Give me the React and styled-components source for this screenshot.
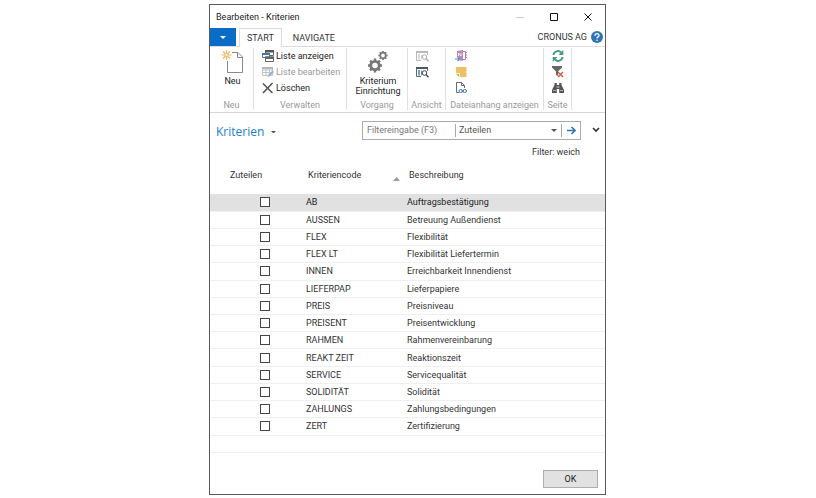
import React, { useState } from "react";
import styled, { createGlobalStyle } from "styled-components";

const GlobalStyle = createGlobalStyle`
  * { box-sizing: border-box; }
  body { margin: 0; background: #fff; }
  body, button, input, select {
    font-family: Roboto, "Open Sans", sans-serif;
    font-size: 9px;
    color: #333;
  }
  button { background: none; border: 0; padding: 0; }
  svg { display: block; flex: none; }
`;

const Desktop = styled.div`
  display: flex;
  justify-content: center;
  min-height: 100vh;
  padding: 4px 1px 3px 0;
`;

const Dialog = styled.section`
  display: flex;
  flex-direction: column;
  width: 100%;
  max-width: 397px;
  background: #fff;
  border: 1px solid #5a5a5a;
`;

const TitleBar = styled.header`
  display: flex;
  align-items: center;
  height: 23px;
  padding: 0 12px 0 6px;
`;

const Title = styled.h1`
  flex: 1;
  margin: 0;
  font-size: 9px;
  font-weight: 400;
  color: #222;
`;

const WindowButtons = styled.div`
  display: flex;
  gap: 24px;
`;

const TabBar = styled.nav`
  display: flex;
  align-items: stretch;
  height: 18px;
`;

const AppMenu = styled.button`
  display: grid;
  place-items: center;
  width: 26px;
  background: #0b6cc7;
`;

const Tab = styled.button`
  position: relative;
  margin-left: 3px;
  padding: 1px 7px 0;
  line-height: 17px;
  color: #333;
  border: 1px solid ${(p) => (p.$active ? "#dcdcdc" : "transparent")};
  border-bottom: 0;
  background: #fff;
  margin-bottom: ${(p) => (p.$active ? "-1px" : "0")};
`;

const Company = styled.div`
  display: flex;
  flex: 1;
  align-items: center;
  justify-content: flex-end;
  gap: 4px;
  padding-right: 2px;
`;

const Ribbon = styled.div`
  display: flex;
  height: 67px;
  padding: 1px 0 2px;
  border-top: 1px solid #dcdcdc;
  border-bottom: 1px solid #d6d6d6;
`;

const Group = styled.div`
  display: flex;
  flex: 0 0 ${(p) => p.$width}px;
  flex-direction: column;
  border-right: 1px solid #e0e0e0;
`;

const GroupBody = styled.div`
  height: 48px;
  padding-left: ${(p) => p.$inset}px;
`;

const GroupLabel = styled.div`
  height: 14px;
  line-height: 18px;
  text-align: center;
  white-space: nowrap;
  color: #999;
`;

const LargeAction = styled.button`
  display: flex;
  flex-direction: column;
  align-items: center;
  gap: 2px;
  width: 100%;
  padding-top: 2px;
  line-height: 10px;
  color: #222;
`;

const SmallAction = styled.button`
  display: flex;
  align-items: center;
  gap: 2px;
  height: 16px;
  line-height: 16px;
  white-space: nowrap;
  color: #222;
  &:disabled { color: #999; }
`;

const PageHead = styled.div`
  display: flex;
  align-items: center;
  height: 34px;
  padding: 0 4px 0 6px;
`;

const PageTitle = styled.button`
  display: flex;
  align-items: center;
  gap: 7px;
  margin: 4px auto 0 0;
  font-family: "Open Sans", sans-serif;
  font-size: 12px;
  line-height: 18px;
  color: #1c7cd0;
`;

const FilterBox = styled.form`
  display: flex;
  align-items: center;
  width: 219px;
  height: 19px;
  border: 1px solid #ababab;
`;

const FilterInput = styled.input`
  width: 93px;
  height: 13px;
  padding: 0 0 0 4px;
  border: 0;
  border-right: 1px solid #aaa;
  outline: 0;
  &::placeholder { color: #777; opacity: 1; }
`;

const FilterSelect = styled.select`
  flex: 1;
  min-width: 0;
  height: 15px;
  padding: 0 0 0 3px;
  appearance: none;
  border: 0;
  background: #fff;
  color: #555;
`;

const GoButton = styled.button`
  display: grid;
  place-items: center;
  width: 19px;
  height: 13px;
  margin-left: 4px;
  border-left: 1px solid #aaa;
`;

const Expand = styled.button`
  display: grid;
  place-items: center;
  width: 10px;
  height: 18px;
  margin-left: 10px;
`;

const FilterStatus = styled.div`
  height: 13px;
  padding-right: 25px;
  line-height: 10px;
  text-align: right;
`;

const TableArea = styled.div`
  display: flex;
  flex: 1;
`;

const Table = styled.table`
  flex: 1;
  width: 100%;
  table-layout: fixed;
  border-collapse: collapse;

  th, td { padding: 0; text-align: left; font-weight: 400; }
  thead tr { height: 34px; }
  th { padding: 0 0 4px 2px; }
  tbody td { height: 17px; line-height: 14px; border-bottom: 1px solid #efefef; }
`;

const Row = styled.tr`
  background: ${(p) => (p.$selected ? "#e1e1e1" : "#fff")};
  color: ${(p) => (p.$selected ? "#222" : "#333")};
`;

const HeadInset = styled.span`
  display: block;
  padding-left: 18px;
`;

const SortHeader = styled.span`
  display: flex;
  align-items: center;
  justify-content: space-between;
  padding-right: 7px;
  svg { margin-top: 8px; }
`;

const CheckCell = styled.td`
  && { padding-left: 50px; }
`;

const Check = styled.input`
  display: block;
  width: 10px;
  height: 10px;
  margin: 0;
  appearance: none;
  border: 1px solid #444;
  background: #fff;
  &:checked { background: #444; box-shadow: inset 0 0 0 2px #fff; }
`;

const Footer = styled.footer`
  display: flex;
  justify-content: flex-end;
  padding: 17px 7px 6px;
`;

const OkButton = styled.button`
  width: 55px;
  height: 18px;
  border: 1px solid #adadad;
  background: #e1e1e1;
  color: #222;
`;

const Caret = ({ color = "#555", size = 6 }) => (
  <svg width={size} height={size / 2} viewBox="0 0 6 3"><path d="M0 0h6L3 3z" fill={color} /></svg>
);

const NewIcon = () => (
  <svg width="24" height="24" viewBox="0 0 24 24" fill="none">
    <path d="M11 2.500h6l4.500 4.500v15.500h-15V11" stroke="#8a8a8a" />
    <path d="M16.500 2.500v5h5" stroke="#8a8a8a" />
    <path d="M5.500 0v10M.5 5h10M2 1.500l7 7M9 1.500l-7 7" stroke="#efb95c" strokeWidth="1.200" />
    <circle cx="5.500" cy="5" r="1.700" fill="#fff" stroke="#efb95c" />
  </svg>
);

const ViewListIcon = () => (
  <svg width="12" height="12" viewBox="0 0 12 12">
    <path d="M3.500.5h8v5h-8z" fill="#fff" stroke="#666" /><path d="M3 0h9v2.500H3z" fill="#555" />
    <path d="M.5 3.500h7v4h-7z" fill="#fff" stroke="#3f76ad" /><path d="M0 3h8v2H0z" fill="#3f76ad" />
    <path d="M3.500 7h8v4.500h-8z" fill="#fff" stroke="#666" /><path d="M3 6.500h9V9H3z" fill="#666" />
  </svg>
);

const EditListIcon = () => (
  <svg width="12" height="12" viewBox="0 0 12 12" fill="none">
    <path d="M.5 1.500h10v8H.5zM.5 4h10M.5 6.500h10M4 2v7.500M7.500 2v7.500" stroke="#c4c4c4" />
    <path d="M0 1h11v2H0z" fill="#b5b5b5" />
    <path d="M5.500 11l1-2.500 4-4 1.500 1.500-4 4z" fill="#8fb4dc" />
  </svg>
);

const DeleteIcon = () => (
  <svg width="12" height="12" viewBox="0 0 12 12" fill="none">
    <path d="M1 1.500l9.500 9.500M10.500 1L1 11" stroke="#555" strokeWidth="1.600" />
  </svg>
);

const Gear = ({ x, y, r, hole, tooth }) => (
  <g transform={`translate(${x} ${y})`} fill="none" stroke="#777">
    <circle r={r} strokeWidth={hole} />
    {[0, 45, 90, 135].map((a) => (
      <path key={a} transform={`rotate(${a})`} strokeWidth={tooth}
        d={`M0 ${-r - hole}V${-r}M0 ${r}V${r + hole}`} />
    ))}
  </g>
);

const GearsIcon = () => (
  <svg width="22" height="24" viewBox="0 0 22 24">
    <Gear x={8} y={15.5} r={4.2} hole={2.8} tooth={2.4} />
    <Gear x={16} y={5.5} r={2.8} hole={1.8} tooth={1.7} />
  </svg>
);

const ListSearchIcon = ({ muted }) => (
  <svg width="13" height="12" viewBox="0 0 13 12" fill="none">
    <path d="M5 10.500H.5v-9h11V5" stroke={muted ? "#b8b8b8" : "#5c6670"} />
    <path d="M0 1h12v2H0z" fill={muted ? "#b8b8b8" : "#4c5a68"} />
    <path d="M3 4v5.500" stroke={muted ? "#ccc" : "#3f85c4"} strokeWidth="1.500" />
    <path d="M5.500 4.500v5" stroke={muted ? "#ddd" : "#58a08c"} />
    <circle cx="8.500" cy="7" r="2.300" fill="#fff" stroke={muted ? "#aaa" : "#444"} />
    <path d="M10 8.500l2.500 2.800" stroke={muted ? "#aaa" : "#444"} strokeWidth="1.300" />
  </svg>
);

const OneNoteIcon = () => (
  <svg width="12" height="12" viewBox="0 0 12 12" fill="none">
    <path d="M2 1l6-1v11l-4-.7V7H2z" fill="#b98bbb" />
    <path d="M3.500 6V3l2.500 3V3" stroke="#fff" strokeWidth=".8" />
    <path d="M8 1.500h2.500v8H8M10.500 2.500H12M10.500 5H12M10.500 7.500H12" stroke="#b07fb3" />
    <path d="M0 9h4M2.500 7l2 2-2 2" stroke="#5a8fca" strokeWidth="1.200" />
  </svg>
);

const NoteIcon = () => (
  <svg width="12" height="12" viewBox="0 0 12 12">
    <path d="M1 1h10.500v10H5V7H1z" fill="#efc064" /><path d="M1 8h3v3z" fill="#dda63f" />
  </svg>
);

const LinkFileIcon = () => (
  <svg width="12" height="12" viewBox="0 0 12 12" fill="none">
    <path d="M4 10.500H1.500V.5h5l3 3V6M6.500.5v3h3" stroke="#6b6b6b" />
    <rect x="4" y="7.500" width="3.500" height="3" rx="1.500" stroke="#3f78b5" />
    <rect x="8" y="7.500" width="3.500" height="3" rx="1.500" stroke="#3f78b5" />
    <path d="M6.500 9h2.500" stroke="#3f78b5" />
  </svg>
);

const RefreshIcon = () => (
  <svg width="12" height="12" viewBox="0 0 12 12" fill="none">
    <path d="M1.500 5a4.300 4.300 0 0 1 7.500-2.500M10.500 7A4.300 4.300 0 0 1 3 9.500" stroke="#459b7c" strokeWidth="1.900" />
    <path d="M11.300 0v5H6.500zM.7 12V7h4.800z" fill="#459b7c" />
  </svg>
);

const ClearFilterIcon = () => (
  <svg width="12" height="12" viewBox="0 0 12 12" fill="none">
    <path d="M0 0h10v1.500L6 5.500V10l-2-1V5.500L0 1.500z" fill="#666" />
    <path d="M6 6l5 5M11 6l-5 5" stroke="#d9502f" strokeWidth="1.300" />
  </svg>
);

const FindIcon = () => (
  <svg width="12" height="12" viewBox="0 0 12 12">
    <path d="M2.500 1h2.300v2h2.400V1h2.300v2l2.500 5v3H7.200V7H4.800v4H0V8l2.500-5z" fill="#555" />
    <path d="M1 8.500h3M8 8.500h3M5.200 4v2M6.800 4v2" stroke="#ddd" strokeWidth=".7" />
  </svg>
);

const HelpIcon = () => (
  <svg width="12" height="12" viewBox="0 0 12 12" fill="none">
    <circle cx="6" cy="6" r="6" fill="#2f75b5" />
    <path d="M4 4.700C4 2 8 2 8 4.500 8 6 6 5.800 6 7.500" stroke="#fff" strokeWidth="1.300" />
    <circle cx="6" cy="9.200" r=".8" fill="#fff" />
  </svg>
);

const criteria = [
  ["AB", "Auftragsbestätigung"],
  ["AUSSEN", "Betreuung Außendienst"],
  ["FLEX", "Flexibilität"],
  ["FLEX LT", "Flexibilität Liefertermin"],
  ["INNEN", "Erreichbarkeit Innendienst"],
  ["LIEFERPAP", "Lieferpapiere"],
  ["PREIS", "Preisniveau"],
  ["PREISENT", "Preisentwicklung"],
  ["RAHMEN", "Rahmenvereinbarung"],
  ["REAKT ZEIT", "Reaktionszeit"],
  ["SERVICE", "Servicequalität"],
  ["SOLIDITÄT", "Solidität"],
  ["ZAHLUNGS", "Zahlungsbedingungen"],
  ["ZERT", "Zertifizierung"],
];

export default function App() {
  const [selected, setSelected] = useState("AB");
  return (
    <>
      <GlobalStyle />
      <Desktop>
        <Dialog aria-label="Bearbeiten - Kriterien">
          <TitleBar>
            <Title>Bearbeiten - Kriterien</Title>
            <WindowButtons>
              <button aria-label="Minimieren">
                <svg width="10" height="10"><path d="M1 5.500h8" stroke="#ccc" /></svg>
              </button>
              <button aria-label="Maximieren">
                <svg width="10" height="10"><path d="M1.500 1.500h7v7h-7z" fill="none" stroke="#111" /></svg>
              </button>
              <button aria-label="Schließen">
                <svg width="10" height="10"><path d="M1.500 1.500l7 7M8.500 1.500l-7 7" stroke="#111" /></svg>
              </button>
            </WindowButtons>
          </TitleBar>

          <TabBar>
            <AppMenu aria-label="Anwendungsmenü"><Caret color="#fff" /></AppMenu>
            <Tab $active>START</Tab>
            <Tab>NAVIGATE</Tab>
            <Company>
              CRONUS AG
              <button aria-label="Hilfe"><HelpIcon /></button>
            </Company>
          </TabBar>

          <Ribbon>
            <Group $width={44}>
              <GroupBody $inset={2}>
                <LargeAction><NewIcon />Neu</LargeAction>
              </GroupBody>
              <GroupLabel>Neu</GroupLabel>
            </Group>
            <Group $width={93}>
              <GroupBody $inset={8}>
                <SmallAction><ViewListIcon />Liste anzeigen</SmallAction>
                <SmallAction disabled><EditListIcon />Liste bearbeiten</SmallAction>
                <SmallAction><DeleteIcon />Löschen</SmallAction>
              </GroupBody>
              <GroupLabel>Verwalten</GroupLabel>
            </Group>
            <Group $width={61}>
              <GroupBody $inset={2}>
                <LargeAction><GearsIcon /><span>Kriterium<br />Einrichtung</span></LargeAction>
              </GroupBody>
              <GroupLabel>Vorgang</GroupLabel>
            </Group>
            <Group $width={38}>
              <GroupBody $inset={8}>
                <SmallAction disabled aria-label="Als Liste anzeigen"><ListSearchIcon muted /></SmallAction>
                <SmallAction aria-label="Als Diagramm anzeigen"><ListSearchIcon /></SmallAction>
              </GroupBody>
              <GroupLabel>Ansicht</GroupLabel>
            </Group>
            <Group $width={98}>
              <GroupBody $inset={9}>
                <SmallAction aria-label="OneNote"><OneNoteIcon /></SmallAction>
                <SmallAction aria-label="Notizen"><NoteIcon /></SmallAction>
                <SmallAction aria-label="Links"><LinkFileIcon /></SmallAction>
              </GroupBody>
              <GroupLabel>Dateianhang anzeigen</GroupLabel>
            </Group>
            <Group $width={28}>
              <GroupBody $inset={8}>
                <SmallAction aria-label="Aktualisieren"><RefreshIcon /></SmallAction>
                <SmallAction aria-label="Filter löschen"><ClearFilterIcon /></SmallAction>
                <SmallAction aria-label="Suchen"><FindIcon /></SmallAction>
              </GroupBody>
              <GroupLabel>Seite</GroupLabel>
            </Group>
          </Ribbon>

          <PageHead>
            <PageTitle>Kriterien<Caret size={5} /></PageTitle>
            <FilterBox onSubmit={(e) => e.preventDefault()}>
              <FilterInput aria-label="Filtereingabe" placeholder="Filtereingabe (F3)" />
              <FilterSelect aria-label="Filterfeld">
                <option>Zuteilen</option>
                <option>Kriteriencode</option>
                <option>Beschreibung</option>
              </FilterSelect>
              <Caret />
              <GoButton aria-label="Filter anwenden">
                <svg width="9" height="9" viewBox="0 0 9 9" fill="none" stroke="#2f75b5" strokeWidth="1.600">
                  <path d="M0 4.500h8M4.500 1L8 4.500 4.500 8" />
                </svg>
              </GoButton>
            </FilterBox>
            <Expand aria-label="Filterbereich erweitern">
              <svg width="8" height="6" viewBox="0 0 8 6"><path d="M1 1l3 3 3-3" fill="none" stroke="#333" strokeWidth="1.600" /></svg>
            </Expand>
          </PageHead>
          <FilterStatus>Filter: weich</FilterStatus>

          <TableArea>
            <Table>
              <colgroup><col width="96" /><col width="101" /><col /></colgroup>
              <thead>
                <tr>
                  <th><HeadInset>Zuteilen</HeadInset></th>
                  <th>
                    <SortHeader>
                      Kriteriencode
                      <svg width="7" height="4" viewBox="0 0 7 4"><path d="M0 4h7L3.500 0z" fill="#999" /></svg>
                    </SortHeader>
                  </th>
                  <th>Beschreibung</th>
                </tr>
              </thead>
              <tbody>
                {criteria.map(([code, text]) => (
                  <Row key={code} $selected={code === selected} onClick={() => setSelected(code)}>
                    <CheckCell><Check type="checkbox" aria-label={`${code} zuteilen`} /></CheckCell>
                    <td>{code}</td>
                    <td>{text}</td>
                  </Row>
                ))}
                <Row><td colSpan={3} /></Row>
              </tbody>
            </Table>
          </TableArea>

          <Footer><OkButton>OK</OkButton></Footer>
        </Dialog>
      </Desktop>
    </>
  );
}
